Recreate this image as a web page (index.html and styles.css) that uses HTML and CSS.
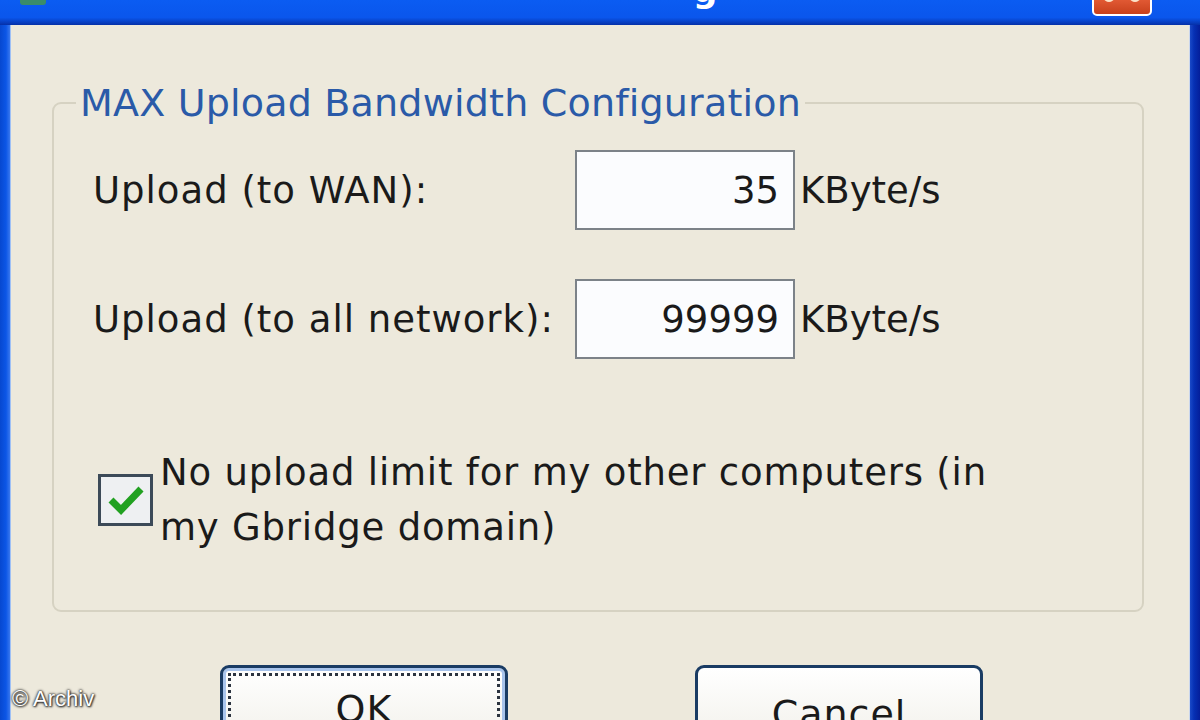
FILE: index.html
```html
<!DOCTYPE html>
<html lang="en">
<head>
    <meta charset="UTF-8">
    <meta name="viewport" content="width=device-width, initial-scale=1.0">
    <title>Bandwidth</title>
    <link rel="stylesheet" href="styles.css">
</head>
<body>
    <div class="window">
        <!-- 타이틀바 -->
        <div class="titlebar">
            <span class="app_icon"></span>
            <span class="title">g</span>
            <span class="close"><span class="x1"></span><span class="x2"></span></span>
        </div>

        <div class="client">
            <fieldset class="group">
                <legend>MAX Upload Bandwidth Configuration</legend>
                <div class="rows">
                    <label for="wan">Upload (to WAN):</label>
                    <input type="text" id="wan" value="35">
                    <span class="unit">KByte/s</span>

                    <label for="all">Upload (to all network):</label>
                    <input type="text" id="all" value="99999">
                    <span class="unit">KByte/s</span>
                </div>
                <label class="check">
                    <span class="box">
                        <svg width="36" height="30" viewBox="0 0 36 30"><path d="M3 15 L13 25 L33 4" fill="none" stroke="#21a121" stroke-width="7"/></svg>
                    </span>
                    <span class="check_txt">No upload limit for my other computers (in my Gbridge domain)</span>
                </label>
            </fieldset>

            <div class="buttons">
                <button class="btn default"><span class="focus">OK</span></button>
                <button class="btn">Cancel</button>
            </div>
        </div>
        <div class="credit">© Archiv</div>
    </div>
</body>
</html>
```

FILE: styles.css
```css
/*기본*/
* {margin: 0; padding: 0; box-sizing: border-box;}
body {width: 1200px; height: 720px; overflow: hidden; background-color: #0a4fdc;}
.window {position: relative; width: 1200px; height: 720px; display: flex; flex-direction: column;
    font-family: "DejaVu Sans", sans-serif; color: #1a1a1a;}

/*타이틀바*/
.titlebar {position: relative; height: 25px; flex: none;
    background: linear-gradient(#0b5cf2, #0a56ec 70%, #0840c4 88%, #0530a8);}
.app_icon {position: absolute; left: 20px; top: -6px; width: 26px; height: 11px; border-radius: 3px;
    background: #3a8c6a;}
.title {position: absolute; left: 693px; top: -30px; font-size: 34px; font-weight: bold; color: #fff;}
.close {position: absolute; left: 1092px; top: -6px; width: 60px; height: 22px; border: 2px solid #fff;
    border-radius: 5px; background: linear-gradient(#e8603a, #c8401c); overflow: hidden;}
.x1, .x2 {position: absolute; top: -2px; width: 10px; height: 8px; border-radius: 50%; background: #fbe2c8;}
.x1 {left: 10px;}
.x2 {right: 10px;}

/*본문*/
.client {flex: 1; margin: 0 10px; background: #ede9dc;
    box-shadow: inset 1px 0 0 #9ec0f6, inset -1px 0 0 #c9d6ee; position: relative;}
.window::before {content: ""; position: absolute; left: 0; top: 25px; bottom: 0; width: 10px;
    background: linear-gradient(90deg, #0748d0, #0c56e6 60%, #3a78ee);}
.window::after {content: ""; position: absolute; right: 0; top: 25px; bottom: 0; width: 10px;
    background: linear-gradient(90deg, #1a4ac8, #0630b4 40%, #041e9a);}

/*그룹 박스*/
.group {margin: 55px 0 0 42px; width: 1092px; height: 532px; border: 2px solid #d6d2c2;
    border-radius: 9px; padding: 0;}
.group legend {margin-left: 22px; padding: 0 4px; font-size: 38px; line-height: 46px; color: #2a5aa8;
    letter-spacing: 0.2px;}

.rows {display: grid; grid-template-columns: 477px 220px auto; column-gap: 5px; row-gap: 49px;
    align-items: center; margin: 24px 0 0 39px;}
.rows label {font-size: 37px; letter-spacing: 1px;}
.rows input {height: 80px; border: 2px solid #7c8288; background: #fbfcfe; text-align: right;
    padding-right: 14px; font-family: inherit; font-size: 37px; color: #1a1a1a;}
.unit {font-size: 37px;}

/*체크 박스*/
.check {display: flex; align-items: center; margin: 86px 0 0 44px;}
.box {flex: none; width: 55px; height: 52px; border: 3px solid #3c4a58; background: #eef0f2;
    display: flex; align-items: center; justify-content: center;}
.check_txt {width: 860px; margin-left: 7px; font-size: 37px; line-height: 55px; letter-spacing: 0.8px;}

/*버튼*/
.buttons {display: flex; margin: 53px 0 0 210px; gap: 187px;}
.btn {width: 288px; height: 84px; border: 3px solid #1a3c64; border-radius: 9px;
    background: linear-gradient(#ffffff, #f4f3ee 80%, #dcd9cc); font-family: inherit; font-size: 38px;
    color: #1a1a1a; padding-top: 14px; letter-spacing: 1px;}
.btn.default {box-shadow: inset 0 0 0 3px #a8c4ec; padding: 5px;}
.focus {display: block; height: 100%; border: 3px dotted #2c3440; padding-top: 11px;}

/*출처*/
.credit {position: absolute; left: 12px; top: 686px; font-family: "Liberation Sans", Arial, sans-serif;
    font-size: 22px; color: #fff; text-shadow: 0 0 3px #222, 0 0 2px #222, 1px 1px 2px #444;}
```
